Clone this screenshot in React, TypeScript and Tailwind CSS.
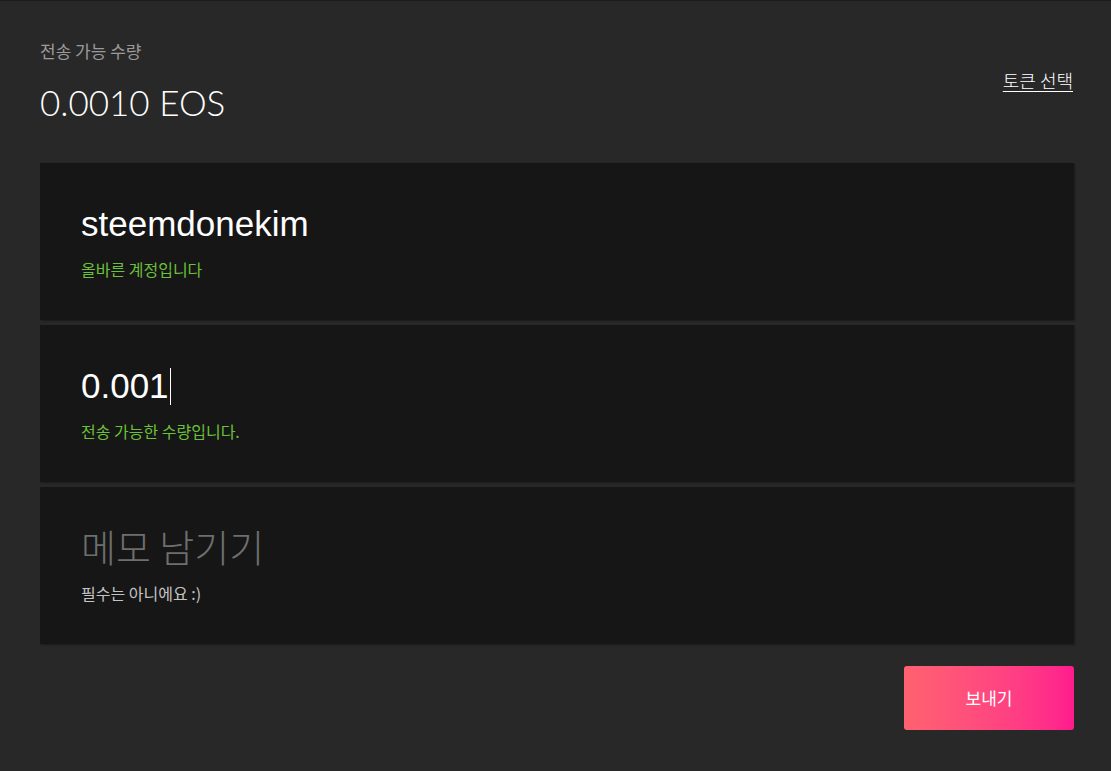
import React from "react";

const kr = "font-['Noto_Sans_CJK_KR','Noto_Sans',sans-serif]";

const Field = ({
  value,
  placeholder,
  hint,
  ok,
  caret,
}: {
  value?: string;
  placeholder?: string;
  hint: string;
  ok?: boolean;
  caret?: boolean;
}) => (
  <div className="h-[157px] bg-[#161616] px-[41px] pt-[39px] shadow-[1px_1px_2px_rgba(0,0,0,0.35)]">
    {value ? (
      <div className="flex h-[44px] items-center font-['Liberation_Sans',Arial,sans-serif] text-[35px] text-white">
        <span>{value}</span>
        {caret && <span className="ml-[1px] h-[37px] w-px bg-white"></span>}
      </div>
    ) : (
      <div className={`flex h-[44px] items-center pb-[6px] ${kr} text-[38px] font-light text-[#6e6e6e]`}>
        {placeholder}
      </div>
    )}
    <div
      className={`mt-[12px] ${kr} text-[16px] leading-[22px] ${
        ok ? "text-[#6cc03a]" : "text-[#c4c4c4]"
      }`}
    >
      {hint}
    </div>
  </div>
);

export default function App() {
  return (
    <div className="min-h-[771px] border-t border-[#1b1b1b] bg-[#282828] pl-[40px] pr-[37px] pt-[39px] pb-[40px]">
      {/* header */}
      <div className="flex items-center justify-between">
        <div>
          <div className={`${kr} text-[17px] leading-[22px] text-[#9a9a9a]`}>전송 가능 수량</div>
          <div className="mt-[18px] font-['Lato',sans-serif] text-[35px] font-light leading-[44px] text-white">
            0.0010 EOS
          </div>
        </div>
        <a href="#" className={`mr-[1px] mb-[4px] ${kr} text-[18px] font-light text-white underline underline-offset-[3px]`}>
          토큰 선택
        </a>
      </div>

      {/* fields */}
      <div className="mt-[39px] flex flex-col gap-[5px]">
        <Field value="steemdonekim" hint="올바른 계정입니다" ok />
        <Field value="0.001" hint="전송 가능한 수량입니다." ok caret />
        <Field placeholder="메모 남기기" hint="필수는 아니에요 :)" />
      </div>

      <div className="mt-[22px] flex justify-end">
        <button
          className={`h-[64px] w-[170px] rounded-[3px] bg-gradient-to-r from-[#ff626f] to-[#ff1b8d] ${kr} text-[17px] font-normal text-white`}
        >
          보내기
        </button>
      </div>
    </div>
  );
}
